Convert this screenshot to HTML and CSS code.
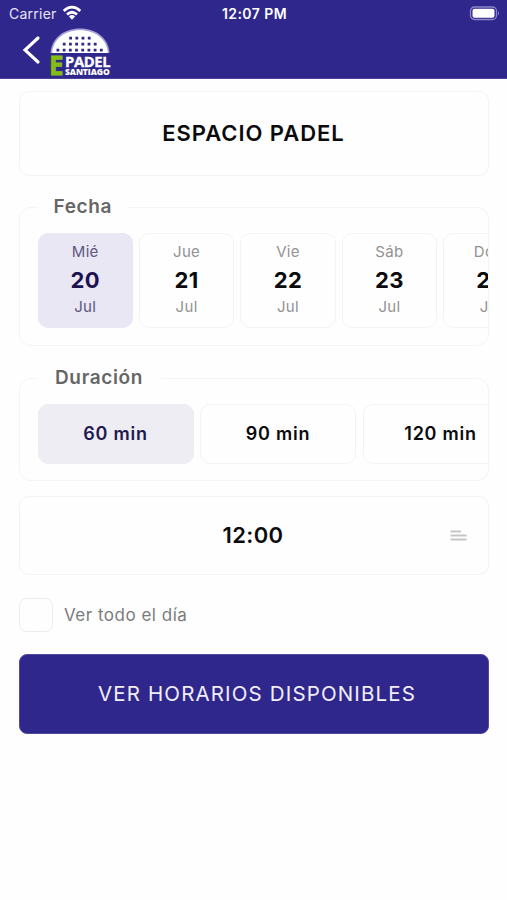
FILE: index.html
```html
<!DOCTYPE html>
<html lang="es">
<head>
<meta charset="utf-8">
<meta name="viewport" content="width=device-width, initial-scale=1">
<title>Espacio Padel</title>
<link rel="stylesheet" href="styles.css">
</head>
<body>
<header class="header">
  <div class="status">
    <div class="carrier"><span>Carrier</span>
      <svg width="20" height="16" viewBox="0 0 20 16" fill="none" stroke="#fff" stroke-width="2.7"><path d="M1.7 5.9Q10-1.5 18.3 5.9M5 9.5Q10 5 15 9.5"/><path d="M6.9 11.4Q10 8.8 13.1 11.4L10 14.7Z" fill="#fff" stroke="none"/></svg>
    </div>
    <span class="clock">12:07 PM</span>
    <svg class="battery" width="31" height="15" viewBox="0 0 31 15"><rect x="1.500" y="1" width="26" height="12.500" rx="4" fill="none" stroke="#8b86c5" stroke-width="1.3"/><rect x="3.500" y="2.8" width="22" height="9" rx="2" fill="#fff"/><path d="M29 5Q31 7.3 29 9.6Z" fill="#8b86c5"/></svg>
  </div>
  <nav class="nav">
    <svg class="back" width="18" height="28" viewBox="0 0 18 28" fill="none" stroke="#fff" stroke-width="3.1" stroke-linecap="round"><path d="M16 2L3 14L16 26"/></svg>
    <div class="logo">
      <svg class="racket" width="60" height="26" viewBox="0 0 60 26">
        <path d="M.5 25C1.500 10 14 .5 30 .5S58.500 10 59.500 25Z" fill="#a7a3d6"/>
        <path d="M2.200 25C3 11 15 2.200 30 2.200S57 11 57.800 25Z" fill="#fff"/>
        <g fill="none" stroke="#30278c" stroke-width="2.700"><path stroke-dasharray="2.800 3.400" d="M19.200 10.200h22"/><path stroke-dasharray="2.800 3.400" d="M12.800 16.200h34.500"/><path stroke-dasharray="2.800 3.400" d="M6.500 22.200h47"/></g>
      </svg>
      <div class="brand"><b class="brand-e">E</b><div class="brand-name"><b class="padel">PADEL</b><b class="santiago">SANTIAGO</b></div></div>
    </div>
  </nav>
</header>
<main class="content">
  <section class="card title">ESPACIO PADEL</section>
  <fieldset class="group dates">
    <legend>Fecha</legend>
    <div class="strip">
      <div class="chip date selected"><span>Mié</span><b>20</b><span>Jul</span></div>
      <div class="chip date"><span>Jue</span><b>21</b><span>Jul</span></div>
      <div class="chip date"><span>Vie</span><b>22</b><span>Jul</span></div>
      <div class="chip date"><span>Sáb</span><b>23</b><span>Jul</span></div>
      <div class="chip date"><span>Dom</span><b>24</b><span>Jul</span></div>
    </div>
  </fieldset>
  <fieldset class="group durations">
    <legend>Duración</legend>
    <div class="strip">
      <div class="chip duration selected">60 min</div>
      <div class="chip duration">90 min</div>
      <div class="chip duration">120 min</div>
    </div>
  </fieldset>
  <section class="card time"><span>12:00</span>
    <svg width="17" height="12" viewBox="0 0 17 12" fill="none" stroke="#c5c5c5" stroke-width="2"><path d="M.5 1.500h10.500M.5 5.500h16M.5 9.500h16"/></svg>
  </section>
  <label class="all-day"><span class="box"></span><span>Ver todo el día</span></label>
  <button class="submit">VER HORARIOS DISPONIBLES</button>
</main>
</body>
</html>
```

FILE: styles.css
```css
* { box-sizing: border-box; }
body { margin: 0; height: 900px; overflow: hidden; background: #fefefe; color: #0b0b0d; font-family: Inter, "Liberation Sans", sans-serif; }
svg { display: block; flex: none; }
.header { height: 79px; background: #30278c; color: #fff; border-bottom: 1px solid #4a429b; }
.status { height: 28px; padding: 0 7px 1px 9px; display: grid; grid-template-columns: 1fr auto 1fr; align-items: center; font-size: 14px; }
.carrier { display: flex; align-items: center; gap: 5px; color: #e6e5f4; letter-spacing: .25px; }
.carrier svg { margin-top: -1px; }
.clock { font-weight: 600; font-size: 14px; letter-spacing: .45px; }
.battery { justify-self: end; }
.nav { display: flex; padding-left: 22px; }
.back { margin-top: 8px; }
.logo { width: 60px; margin-left: 10px; }
.brand { display: flex; gap: 4px; height: 22px; margin-top: 1px; font-family: "Open Sans", sans-serif; }
.brand-e { color: #86bd15; font-size: 26px; line-height: 21px; width: 11px; font-weight: 700; font-family: "Noto Sans", sans-serif; -webkit-text-stroke: .8px #86bd15; margin-left: -1px; margin-right: 1px; }
.brand-name { display: flex; flex-direction: column; }
.padel { font-size: 14.800px; line-height: 13px; font-weight: 700; letter-spacing: -.4px; -webkit-text-stroke: .3px #fff; }
.santiago { font-size: 8.500px; line-height: 8px; font-weight: 800; letter-spacing: -.1px; }
.content { padding: 12px 18px 0 19px; display: flex; flex-direction: column; }
.card { border: 1.500px solid #f3f3f3; border-radius: 10px; display: flex; align-items: center; justify-content: center; font-weight: 600; }
.title { height: 85px; font-size: 22px; letter-spacing: .95px; padding: 0 1px 2px 0; }
.group { margin: 0; padding: 0 0 0 17.500px; min-width: 0; border: 1.500px solid #f4f4f4; border-radius: 12px; overflow: hidden; }
.group legend { height: 24px; line-height: 24px; font-size: 19px; font-weight: 600; color: #666; letter-spacing: .65px; padding: 0 16px; }
.dates { height: 151px; margin-top: 19px; }
.durations { height: 115px; margin-top: 20px; }
.durations legend { padding: 0 18px 0 17.500px; }
.strip { display: flex; gap: 6px; margin-top: 14px; }
.durations .strip { gap: 6.500px; }
.chip { flex: none; border: 1.500px solid #f3f3f3; border-radius: 10px; }
.date { width: 95.400px; height: 95px; display: flex; flex-direction: column; align-items: center; padding-top: 6px; font-size: 15px; color: #929292; letter-spacing: .3px; }
.date span { line-height: 24px; }
.date span:last-child { line-height: 22px; }
.date b { font-size: 22px; line-height: 32px; font-weight: 650; color: #0b0b0d; letter-spacing: .3px; }
.duration { width: 156px; height: 60px; display: flex; align-items: center; justify-content: center; padding-bottom: 2px; font-size: 18px; font-weight: 600; letter-spacing: .75px; }
.selected { background: #e9e7f3; border-color: #e9e7f1; color: #5c5780; }
.date.selected b { color: #1b1250; }
.duration.selected { background: #eeedf3; border-color: #eeedf3; color: #211950; }
.time { height: 79px; margin-top: 15px; font-size: 22px; letter-spacing: .4px; display: grid; grid-template-columns: 1fr auto 1fr; padding: 0 20px 0 19px; }
.time span { grid-column: 2; padding-bottom: 2px; margin-left: -1px; }
.time svg { justify-self: end; margin-right: 1px; }
.all-day { display: flex; align-items: center; gap: 11px; height: 34px; margin-top: 23px; font-size: 17px; color: #7b7b7b; letter-spacing: .5px; }
.box { width: 34px; height: 34px; border: 1.500px solid #ebebeb; border-radius: 8px; }
.submit { height: 80px; margin-top: 22px; border: 1px solid #51499f; border-radius: 8px; background: #30278c; color: #f0effa; font: 400 20.500px Inter, sans-serif; letter-spacing: 1.150px; padding: 0 0 1px 6px; }
```
